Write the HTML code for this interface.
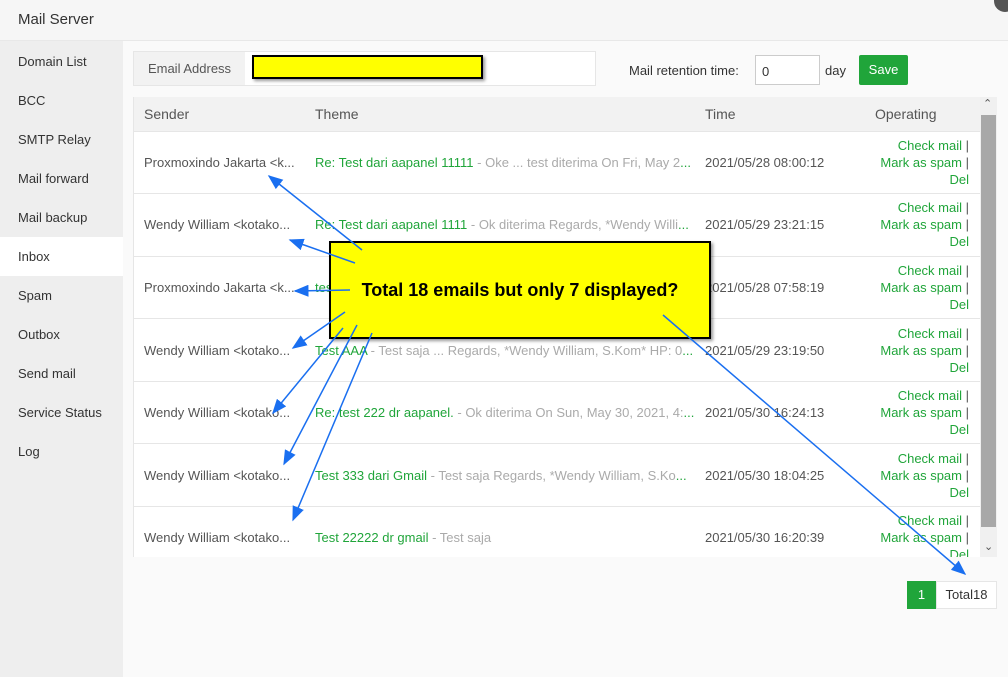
<!DOCTYPE html>
<html><head><meta charset="utf-8"><style>
*{box-sizing:border-box;margin:0;padding:0}
body{width:1008px;height:677px;overflow:hidden;background:#fafafa;font-family:"Liberation Sans",sans-serif;font-size:13px;color:#555;position:relative}
.hdr{position:absolute;left:0;top:0;width:1008px;height:41px;background:#f6f6f6;border-bottom:1px solid #e8e8e8}
.hdr span{position:absolute;left:18px;top:11px;font-size:15px;color:#333}
.close{position:absolute;right:-8px;top:-10px;width:22px;height:22px;border-radius:50%;background:#555}
.side{position:absolute;left:0;top:41px;width:123px;height:636px;background:#eee}
.side div{height:39px;line-height:39px;padding-left:18px;color:#333;font-size:13px}
.side .act{background:#fff}
.ab{position:absolute}
.email{left:133px;top:51px;width:463px;height:35px;border:1px solid #e6e6e6;background:#fff}
.email .lb{position:absolute;left:0;top:0;width:111px;height:33px;background:#f2f2f2;line-height:33px;text-align:center;color:#555}
.yel{background:#ff0;border:2px solid #000;box-shadow:2px 2px 3px rgba(0,0,0,.4)}
table{border-collapse:collapse;position:absolute;left:133px;top:97px;width:847px;background:#fff;table-layout:fixed}
th{height:34px;background:#f2f2f2;font-weight:normal;text-align:left;color:#555;font-size:14px;border-bottom:1px solid #e6e6e6}
td{height:62.6px;border-bottom:1px solid #e6e6e6;white-space:nowrap;font-size:13px;overflow:hidden}
.g{color:#20a53a}.gr{color:#aaa}
.op{text-align:right;padding-right:12px;line-height:17px}
</style></head><body>
<div class="hdr"><span>Mail Server</span></div><div class="close"></div>
<div class="side" style="padding-top:1px">
<div>Domain List</div><div>BCC</div><div>SMTP Relay</div><div>Mail forward</div><div>Mail backup</div><div class="act">Inbox</div><div>Spam</div><div>Outbox</div><div>Send mail</div><div>Service Status</div><div>Log</div></div>
<div class="ab email"><div class="lb">Email Address</div></div>
<div class="ab yel" style="left:252px;top:55px;width:231px;height:24px"></div>
<div class="ab" style="left:629px;top:63px;color:#333">Mail retention time:</div>
<div class="ab" style="left:755px;top:55px;width:65px;height:30px;border:1px solid #ccc;background:#fff;padding:8px 6px;color:#333">0</div>
<div class="ab" style="left:825px;top:63px;color:#333">day</div>
<div class="ab" style="left:859px;top:55px;width:49px;height:30px;background:#20a53a;color:#fff;text-align:center;line-height:30px;border-radius:2px">Save</div>
<div class="ab" style="left:133px;top:97px;width:847px;height:460px;overflow:hidden;border-left:1px solid #e6e6e6">
<table style="left:0;top:0;width:847px">
<colgroup><col style="width:181px"><col style="width:390px"><col style="width:170px"><col></colgroup>
<tr><th style="padding-left:10px">Sender</th><th>Theme</th><th>Time</th><th>Operating</th></tr>
<tr><td style="padding-left:10px">Proxmoxindo Jakarta &lt;k...</td><td><span class="g">Re: Test dari aapanel 11111</span><span class="gr"> - Oke ... test diterima On Fri, May 2</span><span class="g">...</span></td><td>2021/05/28 08:00:12</td><td class="op"><span class="g">Check mail</span> |<br><span class="g">Mark as spam</span> |<br><span class="g">Del</span></td></tr>
<tr><td style="padding-left:10px">Wendy William &lt;kotako...</td><td><span class="g">Re: Test dari aapanel 1111</span><span class="gr"> - Ok diterima Regards, *Wendy Willi</span><span class="g">...</span></td><td>2021/05/29 23:21:15</td><td class="op"><span class="g">Check mail</span> |<br><span class="g">Mark as spam</span> |<br><span class="g">Del</span></td></tr>
<tr><td style="padding-left:10px">Proxmoxindo Jakarta &lt;k...</td><td><span class="g">test</span></td><td>2021/05/28 07:58:19</td><td class="op"><span class="g">Check mail</span> |<br><span class="g">Mark as spam</span> |<br><span class="g">Del</span></td></tr>
<tr><td style="padding-left:10px">Wendy William &lt;kotako...</td><td><span class="g">Test AAA</span><span class="gr"> - Test saja ... Regards, *Wendy William, S.Kom* HP: 0</span><span class="g">...</span></td><td>2021/05/29 23:19:50</td><td class="op"><span class="g">Check mail</span> |<br><span class="g">Mark as spam</span> |<br><span class="g">Del</span></td></tr>
<tr><td style="padding-left:10px">Wendy William &lt;kotako...</td><td><span class="g">Re: test 222 dr aapanel.</span><span class="gr"> - Ok diterima On Sun, May 30, 2021, 4:</span><span class="g">...</span></td><td>2021/05/30 16:24:13</td><td class="op"><span class="g">Check mail</span> |<br><span class="g">Mark as spam</span> |<br><span class="g">Del</span></td></tr>
<tr><td style="padding-left:10px">Wendy William &lt;kotako...</td><td><span class="g">Test 333 dari Gmail</span><span class="gr"> - Test saja Regards, *Wendy William, S.Ko</span><span class="g">...</span></td><td>2021/05/30 18:04:25</td><td class="op"><span class="g">Check mail</span> |<br><span class="g">Mark as spam</span> |<br><span class="g">Del</span></td></tr>
<tr><td style="padding-left:10px">Wendy William &lt;kotako...</td><td><span class="g">Test 22222 dr gmail</span><span class="gr"> - Test saja</span></td><td>2021/05/30 16:20:39</td><td class="op"><span class="g">Check mail</span> |<br><span class="g">Mark as spam</span> |<br><span class="g">Del</span></td></tr>
</table></div>
<div class="ab" style="left:980px;top:97px;width:17px;height:460px;background:#f0f0f0"></div>
<div class="ab" style="left:981px;top:115px;width:15px;height:412px;background:#a8a8a8"></div>
<div class="ab" style="left:983px;top:97px;font-size:11px;color:#555">&#8963;</div>
<div class="ab" style="left:984px;top:540px;font-size:11px;color:#555">&#8964;</div>
<div class="ab" style="left:907px;top:581px;width:29px;height:28px;background:#20a53a;color:#fff;text-align:center;line-height:28px">1</div>
<div class="ab" style="left:936px;top:581px;width:61px;height:28px;background:#fff;border:1px solid #e6e6e6;color:#333;text-align:center;line-height:26px">Total18</div>
<div class="ab yel" style="left:329px;top:241px;width:382px;height:98px;text-align:center;line-height:94px;font-weight:bold;font-size:18px;color:#000">Total 18 emails but only 7 displayed?</div>
<svg class="ab" style="left:0;top:0" width="1008" height="677">
<defs><marker id="a" markerWidth="10" markerHeight="8" refX="9" refY="4" orient="auto"><path d="M0,0 L10,4 L0,8 z" fill="#1a6ff0"/></marker></defs>
<g stroke="#1a6ff0" stroke-width="1.5" marker-end="url(#a)">
<line x1="362" y1="250" x2="269" y2="176"/>
<line x1="355" y1="263" x2="290" y2="240"/>
<line x1="350" y1="290" x2="295" y2="291"/>
<line x1="345" y1="312" x2="293" y2="348"/>
<line x1="343" y1="328" x2="273" y2="413"/>
<line x1="357" y1="325" x2="284" y2="464"/>
<line x1="372" y1="333" x2="293" y2="520"/>
<line x1="663" y1="315" x2="965" y2="574"/>
</g></svg>
</body></html>
